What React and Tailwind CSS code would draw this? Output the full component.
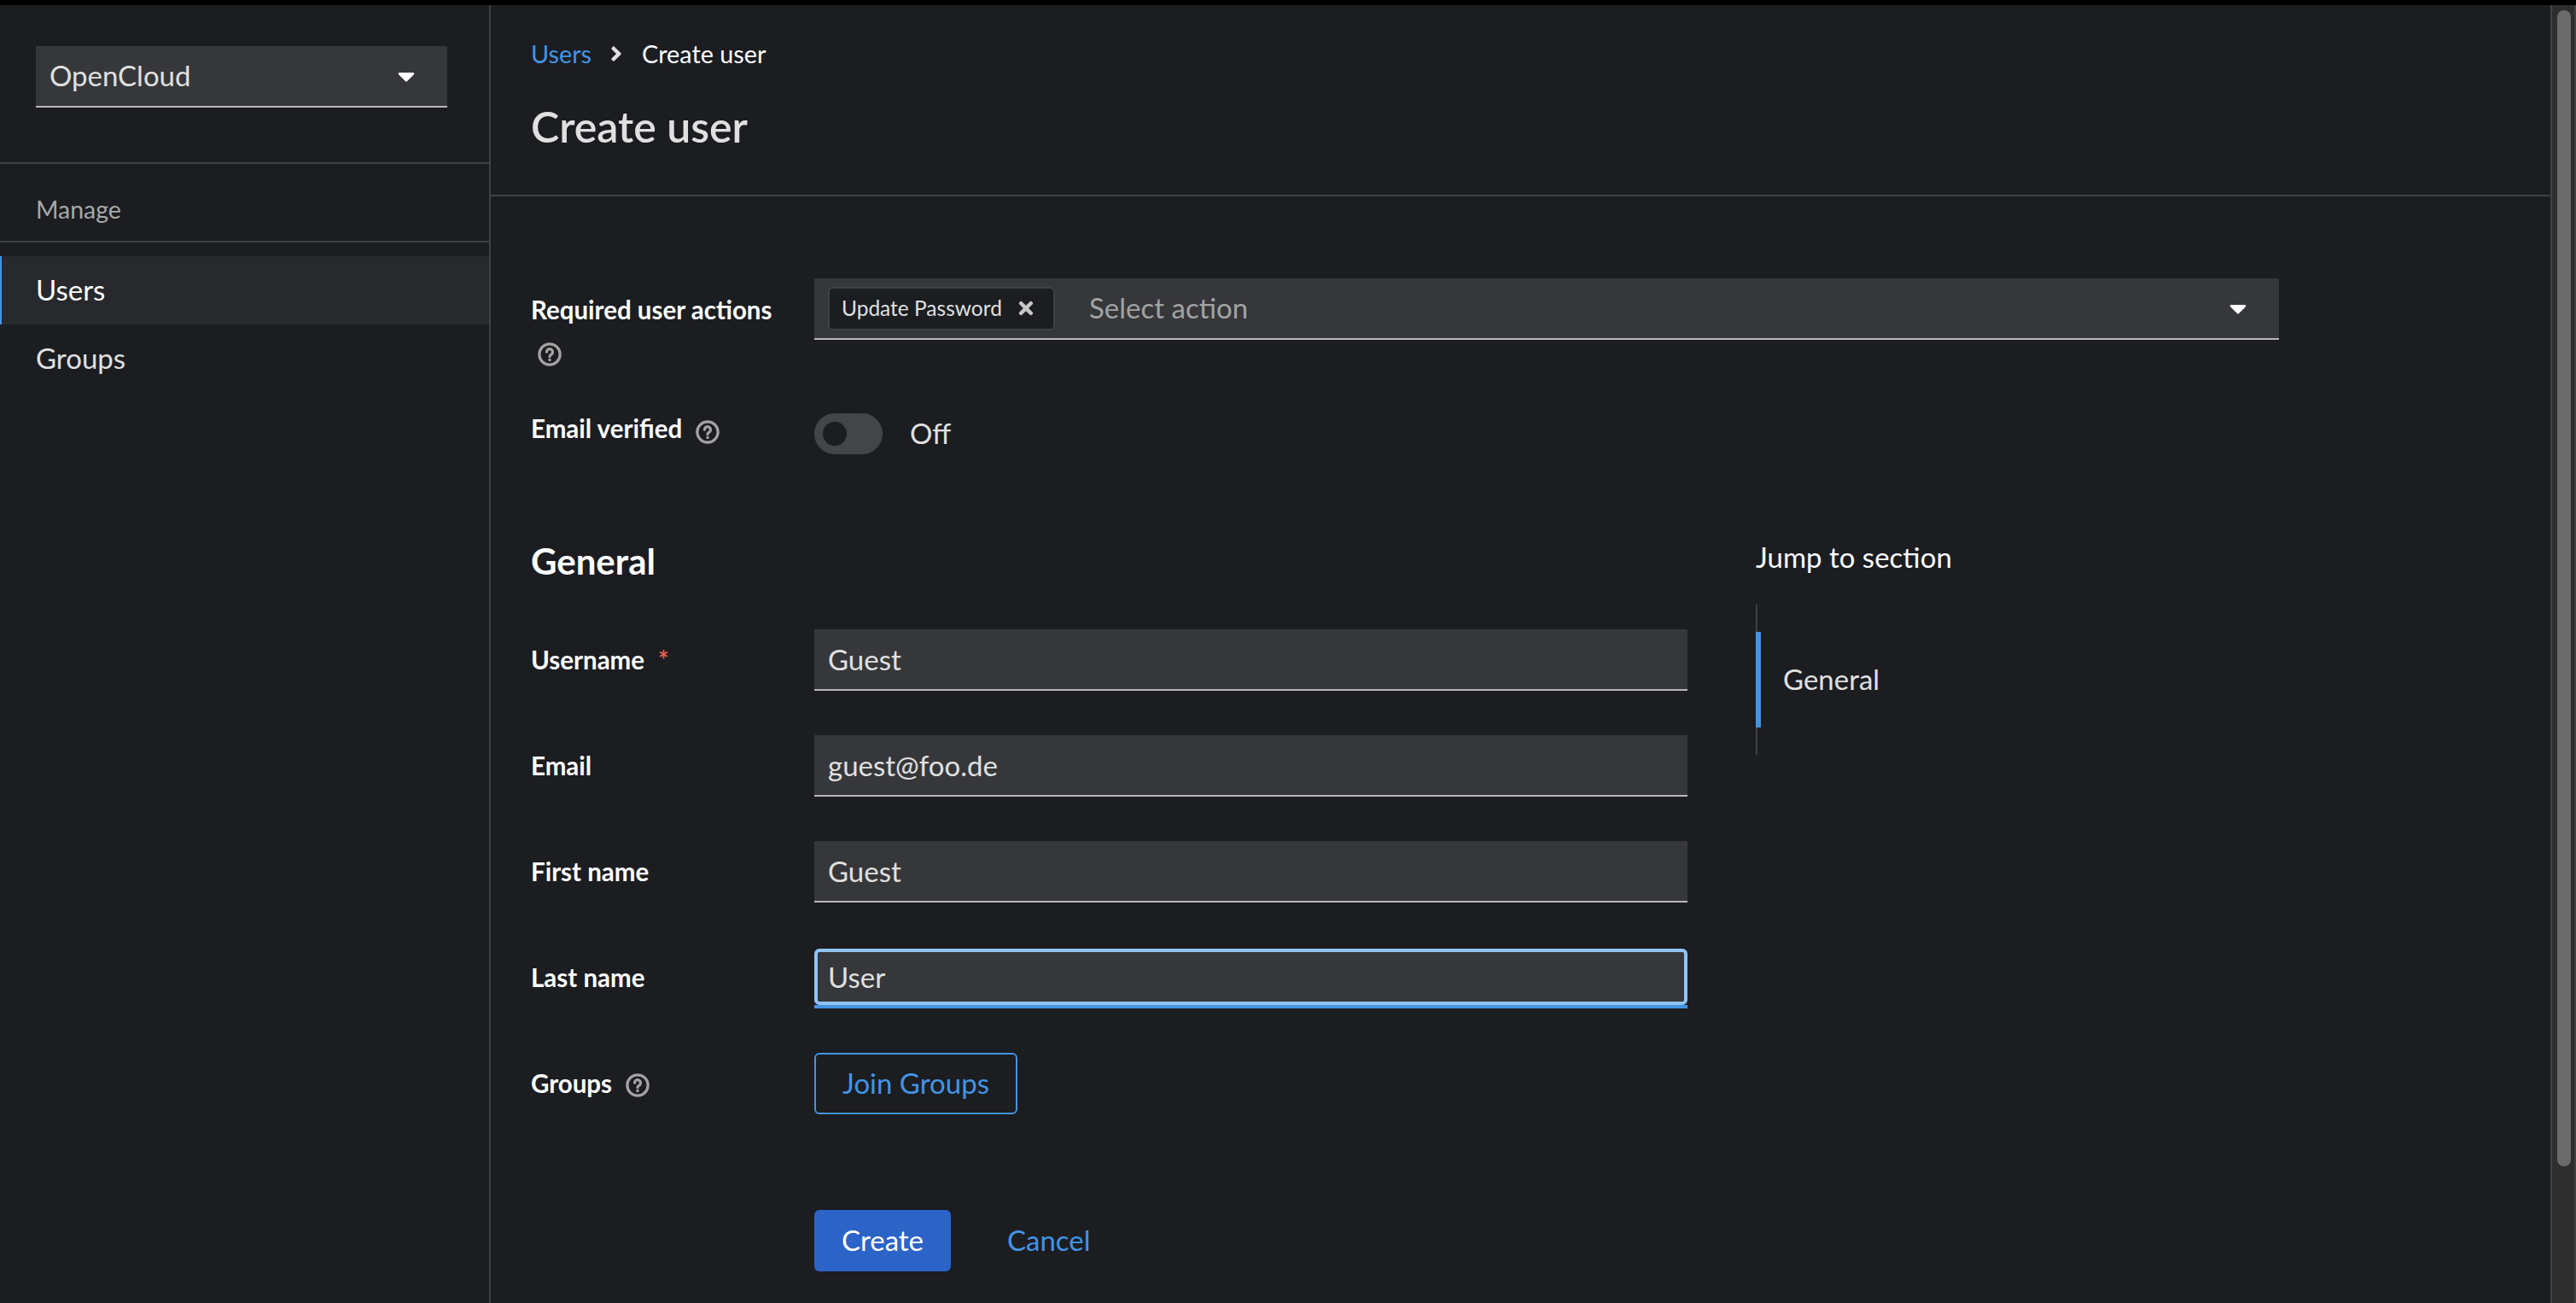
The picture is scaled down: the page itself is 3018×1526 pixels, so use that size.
import { FaAngleRight, FaCaretDown, FaTimes } from "react-icons/fa"

const font = "font-['Lato','Liberation_Sans',sans-serif]"

const Help = ({ className = "" }) => (
  <svg viewBox="0 0 24 24" fill="none" stroke="#a3a3a3" strokeWidth="2.8" className={`h-[28px] w-[28px] shrink-0 ${className}`}>
    <circle cx="12" cy="12" r="10.4" />
    <path d="M9 9.6a3 3 0 1 1 4.6 2.5c-1 .6-1.6 1.1-1.6 2.2" strokeLinecap="round" />
    <circle cx="12" cy="17.6" r="1.5" fill="#a3a3a3" stroke="none" />
  </svg>
)

const Label = ({ children, required, help, helpClass = "mt-1", className = "" }) => (
  <div className={`flex w-[332px] items-center text-[29.5px] font-bold text-white ${className}`}>
    <span>{children}</span>
    {required && <span className="ml-4 text-[#e5604d]">*</span>}
    {help && <Help className={`ml-4 ${helpClass}`} />}
  </div>
)

const Field = ({ label, value, required }) => (
  <div className="mb-[52px] flex h-[72px] items-center">
    <Label required={required}>{label}</Label>
    <input
      readOnly
      value={value}
      className="h-[72px] w-[1023px] border-b-2 border-[#b8b8b8] bg-[#36373a] px-4 text-[33px] text-[#e0e0e0] outline-none"
    />
  </div>
)

const App = () => {
  return (
    <div className={`${font} flex h-[1526px] flex-col overflow-hidden bg-[#1b1d21]`}>
      <div className="h-[6px] bg-black"></div>
      <div className="flex flex-1">
        {/* sidebar */}
        <aside className="w-[575px] shrink-0 border-r-2 border-[#3f4144]">
          <div className="h-[186px] border-b-2 border-[#3f4144] px-[42px] pt-[48px]">
            <div className="flex h-[72px] w-[482px] items-center justify-between border-b-2 border-[#b8b8b8] bg-[#36373a] pl-4 pr-[32px] text-[33px] text-[#e0e0e0]">
              <span>OpenCloud</span>
              <FaCaretDown className="text-[32px] text-white" />
            </div>
          </div>
          <div className="flex h-[92px] items-center border-b-2 border-[#3f4144] px-[42px] pt-[17px] text-[28.5px] text-[#a9a9a9]">Manage</div>
          <nav className="pt-4 text-[33px] text-[#e0e0e0]">
            <div className="flex h-[80px] items-center border-l-2 border-[#4394e5] bg-[#27292d] pl-10 text-white">Users</div>
            <div className="flex h-[80px] items-center pl-[42px]">Groups</div>
          </nav>
        </aside>

        {/* main */}
        <main className="flex-1">
          <header className="h-[224px] border-b-2 border-[#3f4144] px-[47px]">
            <div className="flex items-center pt-[39px] text-[28.8px] leading-9">
              <a className="text-[#4394e5]">Users</a>
              <FaAngleRight className="ml-[15px] mr-[16px] text-[28px] text-[#e0e0e0]" />
              <span className="text-white">Create user</span>
            </div>
            <h1 className="mt-[37px] text-[50px] font-semibold leading-[60px] text-[#e0e0e0]">Create user</h1>
          </header>

          <div className="px-[47px] pt-[96px]">
            <div className="flex">
              <div className="w-[332px] pt-[19px] text-[29.5px] font-bold leading-9 text-white">
                Required user actions
                <Help className="ml-2 mt-[20px]" />
              </div>
              <div className="flex h-[72px] w-[1716px] items-center border-b-2 border-[#b8b8b8] bg-[#36373a] pl-4 pr-[32px]">
                <div className="flex h-[51px] w-[266px] items-center rounded-[6px] border-2 border-[#3f4144] bg-[#1b1d21] pl-[14px] pr-[20px] text-[24.5px] text-[#e0e0e0]">
                  <span>Update Password</span>
                  <FaTimes className="ml-auto text-[24px] text-[#c7c7c7]" />
                </div>
                <span className="ml-10 flex-1 text-[33px] text-[#a3a3a3]">Select action</span>
                <FaCaretDown className="text-[32px] text-white" />
              </div>
            </div>

            <div className="mt-[55px] flex h-[48px] items-center">
              <Label help helpClass="mt-2" className="mb-[12px]">Email verified</Label>
              <div className="flex h-[48px] w-[80px] items-center rounded-full bg-[#434548] pl-[10px]">
                <div className="h-[28px] w-[28px] rounded-full bg-[#1b1d21]"></div>
              </div>
              <span className="ml-8 text-[33px] text-[#e0e0e0]">Off</span>
            </div>

            <div className="mt-[100px] flex">
              <form className="w-[1355px]">
                <h2 className="mb-[55px] flex h-[50px] items-center text-[42px] font-bold text-white">General</h2>
                <Field label="Username" value="Guest" required />
                <Field label="Email" value="guest@foo.de" />
                <Field label="First name" value="Guest" />
                <div className="mb-[52px] flex h-[72px] items-center">
                  <Label>Last name</Label>
                  <div className="mt-[2px] h-[70px] w-[1023px] border-b-4 border-[#4394e5]">
                    <input
                      readOnly
                      value="User"
                      className="h-[66px] w-full rounded-[6px] border-4 border-[#92c3f5] bg-[#36373a] px-3 text-[33px] text-[#e0e0e0] outline-none"
                    />
                  </div>
                </div>
                <div className="flex h-[72px] items-center">
                  <Label help>Groups</Label>
                  <button type="button" className="h-[72px] w-[238px] rounded-[6px] border-2 border-[#4394e5] text-[33px] text-[#4394e5]">
                    Join Groups
                  </button>
                </div>
                <div className="mt-[112px] flex items-center pl-[332px]">
                  <button type="button" className="h-[72px] w-[160px] rounded-[6px] bg-[#2b64c6] text-[33px] text-white">Create</button>
                  <a className="ml-[66px] text-[33px] text-[#4394e5]">Cancel</a>
                </div>
              </form>

              <div className="-mt-[5px] ml-[80px]">
                <div className="text-[33px] leading-[50px] text-white">Jump to section</div>
                <div className="mt-[31px] flex h-[176px] items-center border-l-2 border-[#3f4144]">
                  <div className="-ml-[2px] flex h-[112px] items-center border-l-[6px] border-[#4394e5] pl-[26px] text-[33px] text-[#e0e0e0]">General</div>
                </div>
              </div>
            </div>
          </div>
        </main>

        {/* scrollbar */}
        <div className="w-[30px] shrink-0 border-x-2 border-[#3f4144] bg-[#2e2e2e] pl-[6px] pt-[6px]">
          <div className="h-[1354px] w-[16px] rounded-full bg-[#6b6b6b]"></div>
        </div>
      </div>
    </div>
  )
}

export default App
